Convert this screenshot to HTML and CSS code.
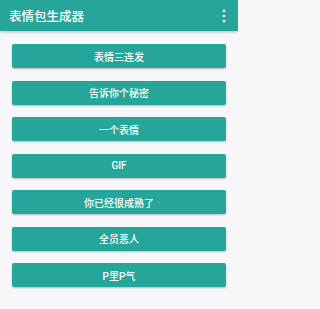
FILE: index.html
```html
<!DOCTYPE html>
<html lang="zh">
<head>
<meta charset="utf-8">
<link rel="stylesheet" href="styles.css">
</head>
<body>
<header class="toolbar">
  <span class="title">表情包生成器</span>
  <svg class="more" width="4" height="14" viewBox="0 0 4 14"><circle cx="2" cy="2" r="1.3" fill="#fff"/><circle cx="2" cy="7" r="1.3" fill="#fff"/><circle cx="2" cy="12" r="1.3" fill="#fff"/></svg>
</header>
<main class="list">
  <div class="btn">表情三连发</div>
  <div class="btn">告诉你个秘密</div>
  <div class="btn">一个表情</div>
  <div class="btn">GIF</div>
  <div class="btn">你已经很成熟了</div>
  <div class="btn">全员恶人</div>
  <div class="btn">P里P气</div>
</main>
</body>
</html>
```
FILE: styles.css
```css
html, body {
  margin: 0;
  padding: 0;
}
html {
  background: #f7f6f9;
}
body {
  width: 238px;
  height: 309px;
  background: #f7f6f9;
  font-family: Roboto, "Noto Sans CJK SC", sans-serif;
  overflow: hidden;
}
.toolbar {
  height: 31px;
  background: #26a69a;
  display: flex;
  align-items: center;
  justify-content: space-between;
  padding: 0 12px 0 9px;
  box-shadow: 0 1px 3px rgba(0,0,0,0.25);
  position: relative;
}
.title {
  color: #fff;
  font-size: 12.5px;
  font-weight: 500;
}
.more {
  display: block;
}
.list {
  display: flex;
  flex-direction: column;
  gap: 12.5px;
  padding: 13px 12px;
}
.btn {
  height: 24px;
  background: #26a69a;
  border-radius: 2px;
  box-shadow: 0 1px 2px rgba(0,0,0,0.25);
  color: #fff;
  font-size: 10px;
  font-weight: 500;
  display: flex;
  align-items: center;
  justify-content: center;
}
```
